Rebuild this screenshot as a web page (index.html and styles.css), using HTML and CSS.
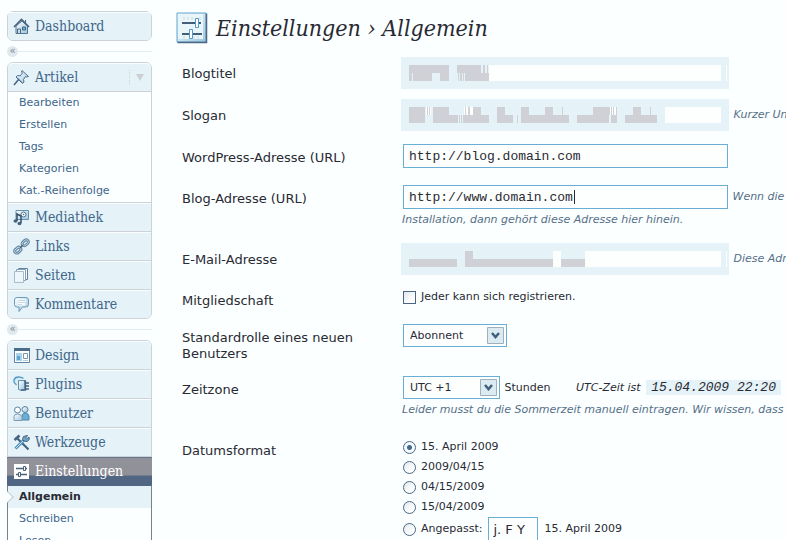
FILE: index.html
```html
<!DOCTYPE html>
<html lang="de">
<head>
<meta charset="utf-8">
<meta name="viewport" content="width=device-width, initial-scale=1">
<title>Einstellungen › Allgemein</title>
<link rel="stylesheet" href="styles.css">
</head>
<body>
<svg class="defs" aria-hidden="true">
  <defs>
    <linearGradient id="steel" x1="0" y1="0" x2="1" y2="1"><stop offset="0" stop-color="#fff"/><stop offset="1" stop-color="#9dc6de"/></linearGradient>
  </defs>
</svg>
<div class="page">
  <nav class="sidebar" aria-label="Hauptmenü">
    <ul class="menu">
      <li><a class="top" href="#"><svg class="icon" viewBox="0 0 17 17"><path d="M3 8v7.500h11.500V8L9 3z" fill="url(#steel)" stroke="#57748f"/><path d="M1 9l7.500-7.500L16 9" fill="none" stroke="#46647f" stroke-width="1.600"/><path d="M12.500 2v3M4.500 15v-4h3v4" fill="none" stroke="#46647f"/><path d="M9.500 9h3v3h-3z" fill="#6eb1d6" stroke="#46647f"/></svg>Dashboard</a></li>
    </ul>
    <div class="separator"><a href="#" aria-label="Menü einklappen">«</a></div>
    <ul class="menu">
      <li><a class="top" href="#"><svg class="icon" viewBox="0 0 17 17"><path d="M1 16l5-6" stroke="#46647f" stroke-width="1.500"/><path d="M9 1.500l6.500 6-2 .5-1-.5-2 3 .5 2.500-1.500 1.500L3 8l1.500-1.500 2.500.5 2.500-3L8.500 3z" fill="url(#steel)" stroke="#46708f"/><path d="M4 8.500l5 5" stroke="#46647f"/></svg>Artikel<span class="toggle"></span></a>
        <ul class="submenu">
          <li><a href="#">Bearbeiten</a></li>
          <li><a href="#">Erstellen</a></li>
          <li><a href="#">Tags</a></li>
          <li><a href="#">Kategorien</a></li>
          <li><a href="#">Kat.-Reihenfolge</a></li>
        </ul>
      </li>
      <li><a class="top" href="#"><svg class="icon" viewBox="0 0 17 17"><path d="M3 1.500h12.500v9H3z" fill="url(#steel)" stroke="#6590ad"/><circle cx="10.500" cy="5.500" r="2.500" fill="#fff" stroke="#46708f"/><circle cx="10.500" cy="5.500" r=".8" fill="#46647f"/><path d="M4 12V5l4 2v7" fill="none" stroke="#354c67" stroke-width="1.500"/><ellipse cx="2.500" cy="12" rx="2" ry="1.700" fill="#46647f"/><ellipse cx="6.500" cy="14.500" rx="2" ry="1.700" fill="#46647f"/></svg>Mediathek</a></li>
      <li><a class="top" href="#"><svg class="icon" viewBox="0 0 17 17"><g fill="none" stroke="#658aa7" stroke-width="1.200"><rect x="8" y="2" width="8.500" height="6" rx="3" transform="rotate(-42 12 5)"/><rect x="9.800" y="3.800" width="5" height="2.500" rx="1.200" transform="rotate(-42 12 5)"/><rect x="0.500" y="9" width="8.500" height="6" rx="3" transform="rotate(-42 5 12)"/><rect x="2.200" y="10.800" width="5" height="2.500" rx="1.200" transform="rotate(-42 5 12)"/></g><path d="M7 10l3-3" stroke="#46647f" stroke-width="1.400"/></svg>Links</a></li>
      <li><a class="top" href="#"><svg class="icon" viewBox="0 0 17 17"><path d="M5.500 1.500h9v11h-9z" fill="#fff" stroke="#60819f"/><path d="M3.500 2.500h9v11h-9z" fill="#fff" stroke="#83a0b8"/><path d="M1.500 4.500h9v11h-9z" fill="#edf6fa" stroke="#a7bdcb"/></svg>Seiten</a></li>
      <li><a class="top" href="#"><svg class="icon" viewBox="0 0 17 17"><path d="M4 1.500h9q2.500 0 2.500 2.500v4.500q0 2.500-2.500 2.500H9.500L6 15.500V11H4q-2.500 0-2.500-2.500V4q0-2.500 2.500-2.500z" fill="url(#steel)" stroke="#6d9bb8"/><path d="M4.500 3.500h8v6h-8z" fill="#f6fbfd"/><path d="M5 4.500h7M5 6.500h7M5 8.500h4" stroke="#c9dae4"/></svg>Kommentare</a></li>
    </ul>
    <div class="separator"><a href="#" aria-label="Menü einklappen">«</a></div>
    <ul class="menu">
      <li><a class="top" href="#"><svg class="icon" viewBox="0 0 17 17"><path d="M1.500 1.500h15v14h-15z" fill="#fff" stroke="#60819f"/><path d="M1 1h16v3H1z" fill="#4b6b8b"/><path d="M3 6h6v8H3z" fill="#a9d3e8"/><path d="M4 9h3v4H4z" fill="#5aa4cf"/><path d="M10.500 6.500h4v5h-4z" fill="#fff" stroke="#7b98ae"/><path d="M10 13.500h5" stroke="#b6cddb"/></svg>Design</a></li>
      <li><a class="top" href="#"><svg class="icon" viewBox="0 0 17 17"><path d="M3.500 9Q.5 7 1 4q1-3 4.500-3 3 0 5 1.500" fill="#d7ecf5" stroke="#559ac5" stroke-width="1.400"/><path d="M5.500 4.500h6v9q-3 2-6 0z" fill="url(#steel)" stroke="#5f91b1"/><path d="M11 4.500l1.500.5v9H8M12 7h4M12 10h4M12 13h4" fill="none" stroke="#46647f" stroke-width="1.300"/></svg>Plugins</a></li>
      <li><a class="top" href="#"><svg class="icon" viewBox="0 0 17 17"><path d="M9 15V10q1-2 3.500-2t3.500 3v4z" fill="#69afd5" stroke="#4c86aa"/><circle cx="12" cy="4.500" r="3" fill="url(#steel)" stroke="#5684a3"/><path d="M1 15.500v-4Q1 9 4.500 9T9 12v3.500z" fill="url(#steel)" stroke="#819db3"/><circle cx="4.500" cy="5" r="3" fill="#fff" stroke="#5684a3"/></svg>Benutzer</a></li>
      <li><a class="top" href="#"><svg class="icon" viewBox="0 0 17 17"><path d="M4 4l11.500 11.500" stroke="#46647f" stroke-width="2.200"/><path d="M1.500 6l5-4.500" stroke="#46647f" stroke-width="2.600"/><path d="M2.500 14.500L11 6" stroke="#4d91bb" stroke-width="3"/><path d="M3 14l7-7" stroke="#c5e4f3"/><path d="M14.500 1.500L12.500 4l1 1 2.500-2 .3 2.500-2.300 2-3-.5L9.500 5.500l1-3z" fill="#71a9c9" stroke="#46647f"/></svg>Werkzeuge</a></li>
      <li><a class="top current" href="#"><svg class="icon" viewBox="0 0 17 17"><path d="M1 1h15v15H1z" fill="#fff"/><path d="M3 5.500h11M3 11.500h11" stroke="#4d6079" stroke-width="1.400"/><path d="M10.500 3.500h2v4h-2zM5.500 9.500h2v4h-2z" fill="#fff" stroke="#4d6079"/></svg>Einstellungen</a>
        <ul class="submenu dark">
          <li><a class="active" href="#">Allgemein</a></li>
          <li><a href="#">Schreiben</a></li>
          <li><a href="#">Lesen</a></li>
        </ul>
      </li>
    </ul>
  </nav>

  <main class="content">
    <header class="heading">
      <svg class="heading-icon" viewBox="0 0 32 32"><path d="M1 1h29v29H1z" fill="url(#steel)" stroke="#5ba5d0"/><path d="M30.500 1.500v29h-29" fill="none" stroke="#4e6883" stroke-width="1.500"/><path d="M2 2h25v25H2z" fill="#eaf5fa"/><path d="M8 5v3M12 5v3M16 5v3M24 5v3M8 24v3M18 24v3M22 24v3" stroke="#cbd8df"/><path d="M6 11h19M6 22h20" stroke="#435e78" stroke-width="2"/><path d="M19.500 6.500h3v9h-3zM13.500 17.500h3v9h-3z" fill="#fff" stroke="#509bc8"/></svg>
      <h1>Einstellungen › Allgemein</h1>
    </header>
    <form class="settings">
      <div class="row single">
        <label for="title">Blogtitel</label>
        <div class="field">
          <div class="masked"><input id="title" type="text"><svg viewBox="0 0 328 32"><path class="veil" d="M7 8h81v16H7z"/><path class="block" d="M8 8h40v8H8zM8 16h3v8H8zM12 16h19v8H12zM39 16h9v8h-9zM56 8h24v8H56zM82 8h2v8h-2zM86 8h1v8h-1zM57 16h1v8h-1zM59 16h2v8h-2zM62 16h1v8h-1zM64 16h24v8H64z"/><path class="gap" d="M325 8h1v16h-1z"/></svg></div>
        </div>
      </div>
      <div class="row single">
        <label for="slogan">Slogan</label>
        <div class="field">
          <div class="masked"><input id="slogan" type="text"><svg viewBox="0 0 328 32"><path class="veil" d="M7 8h257v16H7z"/><path class="gap" d="M25 8h5v8h-5zM63 8h9v8h-9zM208 8h8v8h-8z"/><path class="block" d="M8 8h16v16H8zM26 8h1v8h-1zM28 8h1v8h-1zM32 8h16v16H32zM48 16h9v8h-9zM58 16h1v8h-1zM60 16h1v8h-1zM62 16h26v8H62zM64 8h1v8h-1zM67 8h2v8h-2zM72 8h8v8h-8zM96 8h8v8h16-8v8H96zM104 16h8v8h-8zM116 16h1v8h-1zM120 8h8v8h16V8h8v8h16v8h-48zM161 8h1v8h-1zM176 16h16V8h17v8h-1v8h-32zM210 8h1v8h-1zM212 8h1v8h-1zM215 8h1v8h-1zM210 16h6v8h-6zM224 16h8V8h8v8h16v8h-32zM249 8h1v8h-1z"/></svg></div>
          <span class="hint">Kurzer Untertitel deines Blogs.</span>
        </div>
      </div>
      <div class="row">
        <label for="siteurl">WordPress-Adresse (URL)</label>
        <div class="field"><input class="text" id="siteurl" type="text" value="http://blog.domain.com"></div>
      </div>
      <div class="row tall">
        <label for="home">Blog-Adresse (URL)</label>
        <div class="field">
          <span class="focused"><input class="text" id="home" type="text" value="http://www.domain.com"><i class="caret"></i></span>
          <span class="hint">Wenn die Startseite</span>
          <p class="hint">Installation, dann gehört diese Adresse hier hinein.</p>
        </div>
      </div>
      <div class="row">
        <label for="email">E-Mail-Adresse</label>
        <div class="field">
          <div class="masked"><input id="email" type="text"><svg viewBox="0 0 328 32"><path class="veil" d="M7 8h145v16H7z"/><path class="gap" d="M152 8h8v16h-8zM325 8h1v16h-1z"/><path class="veil" d="M160 8h24v8h-24z"/><path class="block" d="M8 16h48v8H8zM64 8h8v8h80v8H64zM160 16h24v8h-24z"/></svg></div>
          <span class="hint">Diese Adresse wird verwendet</span>
        </div>
      </div>
      <div class="row short">
        <span class="label">Mitgliedschaft</span>
        <div class="field options"><label><input type="checkbox">Jeder kann sich registrieren.</label></div>
      </div>
      <div class="row medium">
        <label for="role">Standardrolle eines neuen Benutzers</label>
        <div class="field">
          <span class="select role"><select id="role"><option>Abonnent</option></select><svg viewBox="0 0 17 17"><path d="M.5.500h16v16H.5z" fill="#dceaf1" stroke="#9fb0bd"/><path d="M5 6l3.500 4L12 6" fill="none" stroke="#41607f" stroke-width="2.500"/></svg></span>
        </div>
      </div>
      <div class="row tall">
        <label for="zone">Zeitzone</label>
        <div class="field">
          <span class="select zone"><select id="zone"><option>UTC +1</option></select><svg viewBox="0 0 17 17"><path d="M.5.500h16v16H.5z" fill="#dceaf1" stroke="#9fb0bd"/><path d="M5 6l3.500 4L12 6" fill="none" stroke="#41607f" stroke-width="2.500"/></svg></span>
          <span class="unit">Stunden</span>
          <span class="utc">UTC-Zeit ist <code>15.04.2009 22:20</code></span>
          <p class="hint">Leider musst du die Sommerzeit manuell eintragen. Wir wissen, dass das nervt.</p>
        </div>
      </div>
      <div class="row">
        <span class="label">Datumsformat</span>
        <div class="field options">
          <label><input type="radio" name="date" checked>15. April 2009</label>
          <label><input type="radio" name="date">2009/04/15</label>
          <label><input type="radio" name="date">04/15/2009</label>
          <label><input type="radio" name="date">15/04/2009</label>
          <div class="custom"><label><input type="radio" name="date">Angepasst:</label><input class="format" type="text" value="j. F Y" aria-label="Datumsformat"><span>15. April 2009</span></div>
        </div>
      </div>
    </form>
  </main>
</div>
</body>
</html>
```
FILE: styles.css
```css
* { box-sizing: border-box; }

body {
  margin: 0;
  height: 100vh;
  overflow: hidden;
  background: #fbffff;
  color: #292a33;
  font: 11px/16px Verdana, "DejaVu Sans", sans-serif;
}

a { color: #3f668b; text-decoration: none; }
ul { margin: 0; padding: 0; list-style: none; }
p { margin: 0; }
.defs { position: absolute; width: 0; height: 0; }

.page { display: flex; gap: 24px; padding: 11px 0 0 7px; }

/* Sidebar */
.sidebar { flex: none; width: 145px; }
.menu { border: 1px solid #ccd2d7; border-radius: 6px; }
.menu > li + li { border-top: 1px solid #ccd2d7; }

.top {
  display: flex;
  align-items: center;
  gap: 5px;
  height: 28px;
  padding: 0 5px 1px;
  border-top: 1px solid #f8fdff;
  background: #e5f2f7;
  font: 14px/20px Georgia, "DejaVu Serif Condensed", "DejaVu Serif", serif;
}
.menu > li:first-child > .top { border-radius: 5px 5px 0 0; }
.menu > li:last-child > .top:last-child { border-radius: 0 0 5px 5px; }
.menu > li:only-child > .top { border-radius: 5px; }
.icon { flex: none; width: 17px; height: 17px; fill: none; }

.toggle {
  margin-left: auto;
  padding: 4px 2px 4px 6px;
  border-left: 1px dotted #ccd2d7;
}
.toggle::before {
  content: "";
  display: block;
  border: 4px solid transparent;
  border-top: 7px solid #ccd0d6;
  border-bottom: 0;
}

.current {
  margin: 0 -1px;
  padding: 0 6px 1px;
  border-color: #66768b;
  background: linear-gradient(#919199 62%, #506683 68%);
  color: #fff;
}

.submenu { border-top: 1px solid #ccd2d7; }
.submenu a { display: block; height: 22px; padding: 0 11px; line-height: 22px; }
.submenu.dark { margin: 0 -1px; border: 1px solid #7c8187; border-top-color: #506683; border-bottom: 0; }
.submenu .active {
  position: relative;
  background: #e5f2f7;
  color: #292a33;
  font-weight: bold;
}
.active::before {
  content: "";
  position: absolute;
  left: -4px;
  top: 7px;
  width: 7px;
  height: 7px;
  border: solid #c3ccd3;
  border-width: 1px 1px 0 0;
  background: #fbffff;
  transform: rotate(45deg);
}

.separator { display: flex; align-items: center; height: 21px; }
.separator::after { content: ""; flex: 1; border-top: 1px solid #e0edf3; }
.separator a {
  width: 11px;
  height: 11px;
  border-radius: 50%;
  background: #e0e9ee;
  color: #85858c;
  font-size: 10px;
  line-height: 9px;
  text-align: center;
}

/* Content */
.content { flex: 1; min-width: 0; overflow: hidden; }
.heading { display: flex; align-items: center; gap: 8px; height: 34px; }
.heading-icon { flex: none; width: 32px; height: 32px; }
h1 {
  margin: 0;
  font: italic 23px/32px Georgia, "DejaVu Serif Condensed", "DejaVu Serif", serif;
  white-space: nowrap;
}

.settings { padding: 8px 0 0 6px; }
.row { display: grid; grid-template-columns: 219px 1fr; min-height: 41px; }
.row.single { min-height: 42px; }
.row.short { min-height: 37px; }
.row.medium { min-height: 52px; }
.row.tall { min-height: 61px; }
.row > label, .row > .label { padding: 13px 40px 0 0; font-size: 13px; }

.field { min-width: 0; padding-top: 7px; white-space: nowrap; }
.row:has(.masked) .field { padding-top: 4px; }

.masked {
  display: inline-block;
  position: relative;
  width: 328px;
  height: 32px;
  vertical-align: middle;
}
.masked input {
  display: block;
  width: 100%;
  height: 100%;
  border: 8px solid #e5f2f7;
  border-radius: 0;
  background: #fdffff;
}
.masked svg { position: absolute; inset: 0; }
.veil { fill: #e5f2f7; }
.gap { fill: #fdffff; }
.block { fill: #cfd1d6; }

.hint { color: #566f88; font-style: italic; }
.field > span.hint { margin-left: 1px; }
p.hint { margin-left: 1px; line-height: 22px; }

.text {
  width: 325px;
  height: 24px;
  margin-left: 2px;
  padding: 0 5px;
  border: 1px solid #68aed5;
  background: #fdffff;
  color: #292a33;
  font: 13px/20px "Courier New", "Liberation Mono", monospace;
  vertical-align: middle;
}
.focused { position: relative; }
.caret {
  position: absolute;
  left: 173px;
  top: 0;
  width: 1px;
  height: 14px;
  background: #292a33;
}

.select { display: inline-block; position: relative; height: 23px; margin-left: 2px; vertical-align: middle; }
.role { width: 104px; }
.zone { width: 97px; }
.select select {
  appearance: none;
  width: 100%;
  height: 100%;
  padding: 0 6px;
  border: 1px solid #68aed5;
  border-radius: 0;
  background: #fdffff;
  color: #292a33;
  font: inherit;
}
.select svg { position: absolute; right: 3px; top: 3px; width: 17px; height: 17px; pointer-events: none; }

.unit { margin-left: 1px; }
.utc { margin-left: 22px; font-style: italic; }
.utc code {
  padding: 0 5px;
  margin-left: 2px;
  background: #e5f2f7;
  font: italic 13px/16px "Courier New", "Liberation Mono", monospace;
}

.options label { display: flex; align-items: center; gap: 5px; height: 20px; margin-left: 2px; }
.options input[type="checkbox"],
.options input[type="radio"] {
  appearance: none;
  flex: none;
  width: 13px;
  height: 13px;
  margin: 0;
  border: 1px solid #4b6684;
  background: linear-gradient(135deg, #dfe7eb, #fdffff 70%);
}
.options input[type="radio"] { border-radius: 50%; }
.options input[type="radio"]:checked { background: radial-gradient(circle, #41698e 2px, #f5fbfd 3px); }

.custom { display: flex; align-items: center; gap: 6px; height: 24px; }
.format {
  width: 50px;
  height: 24px;
  padding: 0 4px;
  border: 1px solid #68aed5;
  background: #fdffff;
  color: #292a33;
  font: 13px/20px Verdana, "DejaVu Sans", sans-serif;
}
```
